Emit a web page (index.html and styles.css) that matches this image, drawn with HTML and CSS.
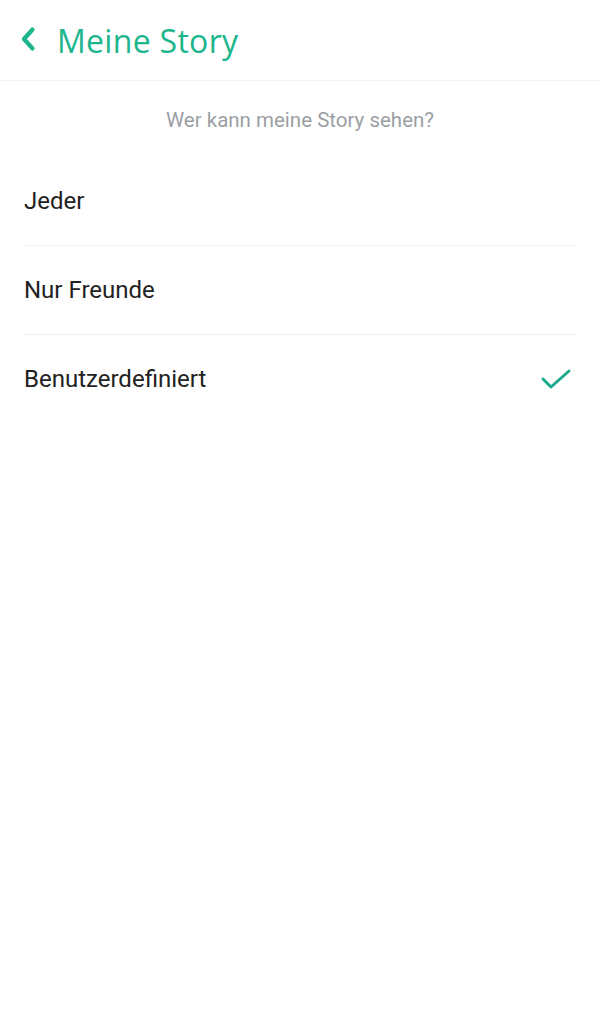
FILE: index.html
```html
<!DOCTYPE html>
<html lang="de">
<head>
    <meta charset="UTF-8">
    <meta name="viewport" content="width=device-width, initial-scale=1.0">
    <title>Meine Story</title>
    <link rel="stylesheet" href="styles.css">
</head>
<body>
    <header class="top-bar">
        <svg class="back-icon" width="16" height="26" viewBox="0 0 16 26">
            <path d="M12.5 3.5 L4 13 L12.5 22.5" fill="none" stroke="#1db58c" stroke-width="4.2" stroke-linecap="round" stroke-linejoin="round"/>
        </svg>
        <h1>Meine Story</h1>
    </header>

    <p class="question">Wer kann meine Story sehen?</p>

    <ul class="options">
        <li class="option">Jeder</li>
        <li class="option">Nur Freunde</li>
        <li class="option selected">
            Benutzerdefiniert
            <svg class="check" width="32" height="24" viewBox="0 0 32 24">
                <path d="M3 12 L11 20 L29 4" fill="none" stroke="#1ba98b" stroke-width="3" stroke-linecap="round" stroke-linejoin="round"/>
            </svg>
        </li>
    </ul>
</body>
</html>
```

FILE: styles.css
```css
body {
    margin: 0;
    background: #fff;
    font-family: Roboto, "Liberation Sans", Arial, sans-serif;
}

.top-bar {
    height: 81px;
    display: flex;
    align-items: center;
    padding-left: 20px;
    gap: 21px;
    border-bottom: 1px solid #f1f1f1;
    box-sizing: border-box;
}
.top-bar h1 {
    margin: 0;
    font-family: "Open Sans", "Noto Sans", sans-serif;
    font-weight: 500;
    font-size: 32px;
    color: #1db58c;
    letter-spacing: 0.3px;
}
.back-icon { margin-top: -2px; }

.question {
    margin: 0;
    height: 76px;
    padding-top: 2px;
    box-sizing: border-box;
    display: flex;
    align-items: center;
    justify-content: center;
    font-size: 20.5px;
    color: #9b9fa4;
}

.options {
    list-style: none;
    margin: 0;
    padding: 0 24px;
}
.option {
    height: 88px;
    display: flex;
    align-items: center;
    justify-content: space-between;
    font-size: 24px;
    color: #222;
    border-bottom: 1px solid #f1f1f1;
}
.option:last-child { border-bottom: none; }
.check { margin-right: 4px; }
```
